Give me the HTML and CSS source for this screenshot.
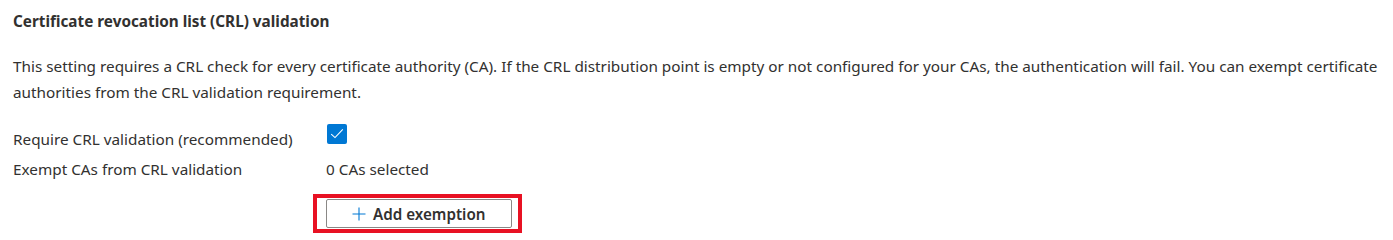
FILE: index.html
```html
<!DOCTYPE html>
<html>
<head>
<meta charset="utf-8">
<link rel="stylesheet" href="styles.css">
</head>
<body>
<div class="page">
  <h2 class="title">Certificate revocation list (CRL) validation</h2>
  <p class="desc">This setting requires a CRL check for every certificate authority (CA). If the CRL distribution point is empty or not configured for your CAs, the authentication will fail. You can exempt certificate authorities from the CRL validation requirement.</p>
  <div class="form">
    <div class="label row1">Require CRL validation (recommended)</div>
    <div class="value row1">
      <span class="checkbox">
        <svg width="20" height="20" viewBox="0 0 20 20"><path d="M4.2 10.2 L8 13.6 L15.8 5.4" fill="none" stroke="#fff" stroke-width="1.1"/></svg>
      </span>
    </div>
    <div class="label row2">Exempt CAs from CRL validation</div>
    <div class="value row2">0 CAs selected</div>
    <div class="label"></div>
    <div class="value">
      <div class="highlight">
        <button class="btn">
          <svg class="plus" width="14" height="14" viewBox="0 0 14 14"><path d="M7 0.5 V13.5 M0.5 7 H13.5" stroke="#0078d4" stroke-width="1.1" fill="none"/></svg>
          <span>Add exemption</span>
        </button>
      </div>
    </div>
  </div>
</div>
</body>
</html>
```
FILE: styles.css
```css
html, body {
  margin: 0;
  padding: 0;
  background: #ffffff;
}
.page {
  padding: 11px 13px 0 13px;
  font-family: "Noto Sans", "Open Sans", sans-serif;
  font-size: 15.3px;
  color: #323130;
}
.title {
  margin: 0;
  font-size: 15.3px;
  font-weight: 700;
  line-height: 20px;
}
.desc {
  margin: 22px 0 0 0;
  line-height: 26px;
}
.form {
  margin-top: 19px;
  display: grid;
  grid-template-columns: 313px auto;
}
.label, .value {
  line-height: 20px;
}
.row1 {
  height: 30px;
  box-sizing: border-box;
}
.label.row1 {
  padding-top: 5px;
}
.row2 {
  height: 25px;
  box-sizing: border-box;
  padding-top: 5px;
}
.checkbox {
  display: block;
  width: 20px;
  height: 20px;
  margin-left: 1px;
  background: #0078d4;
  border-radius: 2px;
}
.checkbox svg { display: block; }
.highlight {
  display: inline-block;
  margin-left: -13px;
  margin-top: 15px;
  border: 4px solid #e81123;
  padding: 1px 6px 1px 9px;
}
.btn {
  display: flex;
  align-items: center;
  gap: 7px;
  width: 186px;
  height: 29px;
  box-sizing: border-box;
  padding: 0 0 0 25px;
  border: 1px solid #8a8886;
  border-radius: 2px;
  background: #fff;
  font-family: inherit;
  font-size: 15.2px;
  font-weight: 600;
  color: #323130;
}
.plus { display: block; }
```
